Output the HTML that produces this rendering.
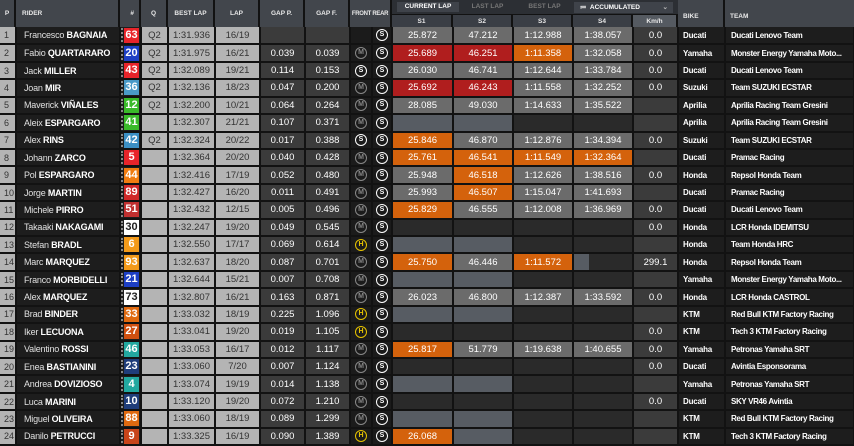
<!DOCTYPE html>
<html><head><meta charset="utf-8"><style>
*{margin:0;padding:0;box-sizing:border-box}
body{width:854px;height:444px;background:#121212;font-family:"Liberation Sans",sans-serif;overflow:hidden;position:relative;color:#eee}
.h{position:absolute;top:0;height:27px;background:#42464c;font-size:6.5px;font-weight:bold;color:#e8e8e8;display:flex;align-items:center;justify-content:center;border-right:2px solid #121212;white-space:nowrap}
table{position:absolute;top:27px;left:0;border-collapse:collapse;table-layout:fixed;width:854px}
td{height:17.43px;border-right:2px solid #121212;border-bottom:2px solid #121212;font-size:9px;text-align:center;white-space:nowrap;overflow:hidden;padding:0}
.p{background:#b4b4b4;color:#333;text-align:left;padding-left:4px}
.lg{background:#b4b4b4;color:#333;font-size:9.5px}
.r{background:#1d1d1d;color:#e0e0e0;text-align:left;padding-left:7px;border-left:2px solid;letter-spacing:-0.2px}
.r b{color:#fff}
.n{background:#1d1d1d;padding:0 1px 0 3px;position:relative}
.n:before{content:"";position:absolute;left:0;top:1px;bottom:1px;border-left:2px dotted #888}
.n span{display:block;height:15px;line-height:15px;color:#fff;font-weight:bold;font-size:11px}
.g{background:#3b3b3b;color:#fff;font-size:9.5px}
.t{background:#1b1b1b}
.c{display:inline-block;width:12px;height:12px;border-radius:50%;border:1.3px solid #fff;font-size:7px;font-weight:bold;line-height:9.5px;text-align:center;vertical-align:middle;color:#fff}
.M{border-color:#888;color:#888}.H{border-color:#e6c300;color:#e6c300}
.sg{background:#6b6b6b;color:#fff;font-size:9.5px}
.sr{background:#b01e1e;color:#fff;font-size:9.5px}
.so{background:#d4620c;color:#fff;font-size:9.5px}
.ss{background:#575c63}
.se{background:#2a2a2a}
.k{background:#3b3b3b;color:#fff;font-size:9.5px}
.b{background:#1d1d1d;color:#fff;text-align:left;padding-left:4px;font-size:8px;font-weight:bold;letter-spacing:-0.2px}
.tm{background:#1d1d1d;color:#fff;text-align:left;padding-left:5px;border-left:2px solid;font-size:8px;font-weight:bold;letter-spacing:-0.35px;text-overflow:ellipsis}
</style></head><body>
<div class="h" style="left:0;width:16px">P</div>
<div class="h" style="left:16px;width:104px;justify-content:flex-start;padding-left:6px">RIDER</div>
<div class="h" style="left:120px;width:21px;justify-content:flex-end;padding-right:5px">#</div>
<div class="h" style="left:141px;width:27px">Q</div>
<div class="h" style="left:168px;width:47px">BEST LAP</div>
<div class="h" style="left:215px;width:45px">LAP</div>
<div class="h" style="left:260px;width:45px">GAP P.</div>
<div class="h" style="left:305px;width:45px">GAP F.</div>
<div class="h" style="left:350px;width:42px;font-size:6px;letter-spacing:-0.3px">FRONT REAR</div>
<div style="position:absolute;left:392px;top:0;width:286px;height:14px;background:#2c2f34"></div>
<div style="position:absolute;left:397px;top:2px;width:62px;height:10px;background:#3f434a;font-size:6.5px;font-weight:bold;color:#fff;text-align:center;line-height:10px">CURRENT LAP</div>
<div style="position:absolute;left:460px;top:2px;width:55px;height:10px;font-size:6.5px;font-weight:bold;color:#777;text-align:center;line-height:10px">LAST LAP</div>
<div style="position:absolute;left:517px;top:2px;width:55px;height:10px;font-size:6.5px;font-weight:bold;color:#777;text-align:center;line-height:10px">BEST LAP</div>
<div style="position:absolute;left:574px;top:2px;width:99px;height:11px;background:#3f434a;font-size:6.5px;font-weight:bold;color:#fff;line-height:11px;padding-left:6px">&#8788;&nbsp; ACCUMULATED<span style="position:absolute;right:5px;color:#bbb">&#8964;</span></div>
<div class="h" style="left:392px;top:15px;height:12px;width:61px;background:#3a3e45">S1</div>
<div class="h" style="left:453px;top:15px;height:12px;width:60px;background:#3a3e45">S2</div>
<div class="h" style="left:513px;top:15px;height:12px;width:60px;background:#3a3e45">S3</div>
<div class="h" style="left:573px;top:15px;height:12px;width:60px;background:#3a3e45">S4</div>
<div class="h" style="left:633px;top:15px;height:12px;width:45px;background:#555a61">Km/h</div>
<div class="h" style="left:678px;width:47px;justify-content:flex-start;padding-left:5px;align-items:flex-end;padding-bottom:7px">BIKE</div>
<div class="h" style="left:725px;width:129px;justify-content:flex-start;padding-left:5px;align-items:flex-end;padding-bottom:7px;border-right:0">TEAM</div>
<table>
<colgroup><col style="width:16px"><col style="width:104px"><col style="width:21px"><col style="width:27px"><col style="width:47px"><col style="width:45px"><col style="width:45px"><col style="width:45px"><col style="width:22px"><col style="width:20px"><col style="width:61px"><col style="width:60px"><col style="width:60px"><col style="width:60px"><col style="width:45px"><col style="width:47px"><col style="width:129px"></colgroup>
<tr><td class="p">1</td><td class="r" style="border-left-color:#e8242a">Francesco <b>BAGNAIA</b></td><td class="n"><span style="background:#e8242a">63</span></td><td class="lg">Q2</td><td class="lg">1:31.936</td><td class="lg">16/19</td><td class="g"></td><td class="g"></td><td class="t"></td><td class="t"><span class="c">S</span></td><td class="sg">25.872</td><td class="sg">47.212</td><td class="sg">1:12.988</td><td class="sg">1:38.057</td><td class="k">0.0</td><td class="b">Ducati</td><td class="tm" style="border-left-color:#e8242a">Ducati Lenovo Team</td></tr>
<tr><td class="p">2</td><td class="r" style="border-left-color:#1d3fc4">Fabio <b>QUARTARARO</b></td><td class="n"><span style="background:#1d3fc4">20</span></td><td class="lg">Q2</td><td class="lg">1:31.975</td><td class="lg">16/21</td><td class="g">0.039</td><td class="g">0.039</td><td class="t"><span class="c M">M</span></td><td class="t"><span class="c">S</span></td><td class="sr">25.689</td><td class="sr">46.251</td><td class="so">1:11.358</td><td class="sg">1:32.058</td><td class="k">0.0</td><td class="b">Yamaha</td><td class="tm" style="border-left-color:#1d3fc4">Monster Energy Yamaha Moto...</td></tr>
<tr><td class="p">3</td><td class="r" style="border-left-color:#e8242a">Jack <b>MILLER</b></td><td class="n"><span style="background:#e8242a">43</span></td><td class="lg">Q2</td><td class="lg">1:32.089</td><td class="lg">19/21</td><td class="g">0.114</td><td class="g">0.153</td><td class="t"><span class="c">S</span></td><td class="t"><span class="c">S</span></td><td class="sg">26.030</td><td class="sg">46.741</td><td class="sg">1:12.644</td><td class="sg">1:33.784</td><td class="k">0.0</td><td class="b">Ducati</td><td class="tm" style="border-left-color:#e8242a">Ducati Lenovo Team</td></tr>
<tr><td class="p">4</td><td class="r" style="border-left-color:#4a9ac8">Joan <b>MIR</b></td><td class="n"><span style="background:#4a9ac8">36</span></td><td class="lg">Q2</td><td class="lg">1:32.136</td><td class="lg">18/23</td><td class="g">0.047</td><td class="g">0.200</td><td class="t"><span class="c M">M</span></td><td class="t"><span class="c">S</span></td><td class="sr">25.692</td><td class="sr">46.243</td><td class="sg">1:11.558</td><td class="sg">1:32.252</td><td class="k">0.0</td><td class="b">Suzuki</td><td class="tm" style="border-left-color:#4a9ac8">Team SUZUKI ECSTAR</td></tr>
<tr><td class="p">5</td><td class="r" style="border-left-color:#3aba2a">Maverick <b>VIÑALES</b></td><td class="n"><span style="background:#3aba2a">12</span></td><td class="lg">Q2</td><td class="lg">1:32.200</td><td class="lg">10/21</td><td class="g">0.064</td><td class="g">0.264</td><td class="t"><span class="c M">M</span></td><td class="t"><span class="c">S</span></td><td class="sg">28.085</td><td class="sg">49.030</td><td class="sg">1:14.633</td><td class="sg">1:35.522</td><td class="k"></td><td class="b">Aprilia</td><td class="tm" style="border-left-color:#3aba2a">Aprilia Racing Team Gresini</td></tr>
<tr><td class="p">6</td><td class="r" style="border-left-color:#3aba2a">Aleix <b>ESPARGARO</b></td><td class="n"><span style="background:#3aba2a">41</span></td><td class="lg"></td><td class="lg">1:32.307</td><td class="lg">21/21</td><td class="g">0.107</td><td class="g">0.371</td><td class="t"><span class="c M">M</span></td><td class="t"><span class="c">S</span></td><td class="ss"></td><td class="ss"></td><td class="se"></td><td class="se"></td><td class="k"></td><td class="b">Aprilia</td><td class="tm" style="border-left-color:#3aba2a">Aprilia Racing Team Gresini</td></tr>
<tr><td class="p">7</td><td class="r" style="border-left-color:#3b8fc4">Alex <b>RINS</b></td><td class="n"><span style="background:#3b8fc4">42</span></td><td class="lg">Q2</td><td class="lg">1:32.324</td><td class="lg">20/22</td><td class="g">0.017</td><td class="g">0.388</td><td class="t"><span class="c">S</span></td><td class="t"><span class="c">S</span></td><td class="so">25.846</td><td class="sg">46.870</td><td class="sg">1:12.876</td><td class="sg">1:34.394</td><td class="k">0.0</td><td class="b">Suzuki</td><td class="tm" style="border-left-color:#3b8fc4">Team SUZUKI ECSTAR</td></tr>
<tr><td class="p">8</td><td class="r" style="border-left-color:#e8242a">Johann <b>ZARCO</b></td><td class="n"><span style="background:#e8242a">5</span></td><td class="lg"></td><td class="lg">1:32.364</td><td class="lg">20/20</td><td class="g">0.040</td><td class="g">0.428</td><td class="t"><span class="c M">M</span></td><td class="t"><span class="c">S</span></td><td class="so">25.761</td><td class="so">46.541</td><td class="so">1:11.549</td><td class="so">1:32.364</td><td class="k"></td><td class="b">Ducati</td><td class="tm" style="border-left-color:#c02030">Pramac Racing</td></tr>
<tr><td class="p">9</td><td class="r" style="border-left-color:#f07c10">Pol <b>ESPARGARO</b></td><td class="n"><span style="background:#f07c10">44</span></td><td class="lg"></td><td class="lg">1:32.416</td><td class="lg">17/19</td><td class="g">0.052</td><td class="g">0.480</td><td class="t"><span class="c M">M</span></td><td class="t"><span class="c">S</span></td><td class="sg">25.948</td><td class="so">46.518</td><td class="sg">1:12.626</td><td class="sg">1:38.516</td><td class="k">0.0</td><td class="b">Honda</td><td class="tm" style="border-left-color:#f07c10">Repsol Honda Team</td></tr>
<tr><td class="p">10</td><td class="r" style="border-left-color:#d02828">Jorge <b>MARTIN</b></td><td class="n"><span style="background:#d02828">89</span></td><td class="lg"></td><td class="lg">1:32.427</td><td class="lg">16/20</td><td class="g">0.011</td><td class="g">0.491</td><td class="t"><span class="c M">M</span></td><td class="t"><span class="c">S</span></td><td class="sg">25.993</td><td class="so">46.507</td><td class="sg">1:15.047</td><td class="sg">1:41.693</td><td class="k"></td><td class="b">Ducati</td><td class="tm" style="border-left-color:#c02030">Pramac Racing</td></tr>
<tr><td class="p">11</td><td class="r" style="border-left-color:#c03030">Michele <b>PIRRO</b></td><td class="n"><span style="background:#c03030">51</span></td><td class="lg"></td><td class="lg">1:32.432</td><td class="lg">12/15</td><td class="g">0.005</td><td class="g">0.496</td><td class="t"><span class="c M">M</span></td><td class="t"><span class="c">S</span></td><td class="so">25.829</td><td class="sg">46.555</td><td class="sg">1:12.008</td><td class="sg">1:36.969</td><td class="k">0.0</td><td class="b">Ducati</td><td class="tm" style="border-left-color:#e8242a">Ducati Lenovo Team</td></tr>
<tr><td class="p">12</td><td class="r" style="border-left-color:#fff">Takaaki <b>NAKAGAMI</b></td><td class="n"><span style="background:#fff;color:#222">30</span></td><td class="lg"></td><td class="lg">1:32.247</td><td class="lg">19/20</td><td class="g">0.049</td><td class="g">0.545</td><td class="t"><span class="c M">M</span></td><td class="t"><span class="c">S</span></td><td class="se"></td><td class="se"></td><td class="se"></td><td class="se"></td><td class="k">0.0</td><td class="b">Honda</td><td class="tm" style="border-left-color:#fff">LCR Honda IDEMITSU</td></tr>
<tr><td class="p">13</td><td class="r" style="border-left-color:#f39a1a">Stefan <b>BRADL</b></td><td class="n"><span style="background:#f39a1a">6</span></td><td class="lg"></td><td class="lg">1:32.550</td><td class="lg">17/17</td><td class="g">0.069</td><td class="g">0.614</td><td class="t"><span class="c H">H</span></td><td class="t"><span class="c">S</span></td><td class="ss"></td><td class="ss"></td><td class="se"></td><td class="se"></td><td class="k"></td><td class="b">Honda</td><td class="tm" style="border-left-color:#f07c10">Team Honda HRC</td></tr>
<tr><td class="p">14</td><td class="r" style="border-left-color:#f39a1a">Marc <b>MARQUEZ</b></td><td class="n"><span style="background:#f39a1a">93</span></td><td class="lg"></td><td class="lg">1:32.637</td><td class="lg">18/20</td><td class="g">0.087</td><td class="g">0.701</td><td class="t"><span class="c M">M</span></td><td class="t"><span class="c">S</span></td><td class="so">25.750</td><td class="sg">46.446</td><td class="so">1:11.572</td><td class="se" style="background:linear-gradient(90deg,#575c63 15px,#2a2a2a 15px)"></td><td class="k">299.1</td><td class="b">Honda</td><td class="tm" style="border-left-color:#f07c10">Repsol Honda Team</td></tr>
<tr><td class="p">15</td><td class="r" style="border-left-color:#1d3fc4">Franco <b>MORBIDELLI</b></td><td class="n"><span style="background:#1d3fc4">21</span></td><td class="lg"></td><td class="lg">1:32.644</td><td class="lg">15/21</td><td class="g">0.007</td><td class="g">0.708</td><td class="t"><span class="c M">M</span></td><td class="t"><span class="c">S</span></td><td class="ss"></td><td class="ss"></td><td class="se"></td><td class="se"></td><td class="k"></td><td class="b">Yamaha</td><td class="tm" style="border-left-color:#1d3fc4">Monster Energy Yamaha Moto...</td></tr>
<tr><td class="p">16</td><td class="r" style="border-left-color:#fff">Alex <b>MARQUEZ</b></td><td class="n"><span style="background:#fff;color:#222">73</span></td><td class="lg"></td><td class="lg">1:32.807</td><td class="lg">16/21</td><td class="g">0.163</td><td class="g">0.871</td><td class="t"><span class="c M">M</span></td><td class="t"><span class="c">S</span></td><td class="sg">26.023</td><td class="sg">46.800</td><td class="sg">1:12.387</td><td class="sg">1:33.592</td><td class="k">0.0</td><td class="b">Honda</td><td class="tm" style="border-left-color:#fff">LCR Honda CASTROL</td></tr>
<tr><td class="p">17</td><td class="r" style="border-left-color:#e06a10">Brad <b>BINDER</b></td><td class="n"><span style="background:#e06a10">33</span></td><td class="lg"></td><td class="lg">1:33.032</td><td class="lg">18/19</td><td class="g">0.225</td><td class="g">1.096</td><td class="t"><span class="c H">H</span></td><td class="t"><span class="c">S</span></td><td class="ss"></td><td class="ss"></td><td class="se"></td><td class="se"></td><td class="k"></td><td class="b">KTM</td><td class="tm" style="border-left-color:#e06a10">Red Bull KTM Factory Racing</td></tr>
<tr><td class="p">18</td><td class="r" style="border-left-color:#d05010">Iker <b>LECUONA</b></td><td class="n"><span style="background:#d05010">27</span></td><td class="lg"></td><td class="lg">1:33.041</td><td class="lg">19/20</td><td class="g">0.019</td><td class="g">1.105</td><td class="t"><span class="c H">H</span></td><td class="t"><span class="c">S</span></td><td class="se"></td><td class="se"></td><td class="se"></td><td class="se"></td><td class="k">0.0</td><td class="b">KTM</td><td class="tm" style="border-left-color:#d05010">Tech 3 KTM Factory Racing</td></tr>
<tr><td class="p">19</td><td class="r" style="border-left-color:#22a8a0">Valentino <b>ROSSI</b></td><td class="n"><span style="background:#22a8a0">46</span></td><td class="lg"></td><td class="lg">1:33.053</td><td class="lg">16/17</td><td class="g">0.012</td><td class="g">1.117</td><td class="t"><span class="c M">M</span></td><td class="t"><span class="c">S</span></td><td class="so">25.817</td><td class="sg">51.779</td><td class="sg">1:19.638</td><td class="sg">1:40.655</td><td class="k">0.0</td><td class="b">Yamaha</td><td class="tm" style="border-left-color:#22a8a0">Petronas Yamaha SRT</td></tr>
<tr><td class="p">20</td><td class="r" style="border-left-color:#1f3d7a">Enea <b>BASTIANINI</b></td><td class="n"><span style="background:#1f3d7a">23</span></td><td class="lg"></td><td class="lg">1:33.060</td><td class="lg">7/20</td><td class="g">0.007</td><td class="g">1.124</td><td class="t"><span class="c M">M</span></td><td class="t"><span class="c">S</span></td><td class="se"></td><td class="se"></td><td class="se"></td><td class="se"></td><td class="k">0.0</td><td class="b">Ducati</td><td class="tm" style="border-left-color:#1f3d7a">Avintia Esponsorama</td></tr>
<tr><td class="p">21</td><td class="r" style="border-left-color:#22a8a0">Andrea <b>DOVIZIOSO</b></td><td class="n"><span style="background:#22a8a0">4</span></td><td class="lg"></td><td class="lg">1:33.074</td><td class="lg">19/19</td><td class="g">0.014</td><td class="g">1.138</td><td class="t"><span class="c M">M</span></td><td class="t"><span class="c">S</span></td><td class="ss"></td><td class="ss"></td><td class="se"></td><td class="se"></td><td class="k"></td><td class="b">Yamaha</td><td class="tm" style="border-left-color:#22a8a0">Petronas Yamaha SRT</td></tr>
<tr><td class="p">22</td><td class="r" style="border-left-color:#1f3d7a">Luca <b>MARINI</b></td><td class="n"><span style="background:#1f3d7a">10</span></td><td class="lg"></td><td class="lg">1:33.120</td><td class="lg">19/20</td><td class="g">0.072</td><td class="g">1.210</td><td class="t"><span class="c M">M</span></td><td class="t"><span class="c">S</span></td><td class="se"></td><td class="se"></td><td class="se"></td><td class="se"></td><td class="k">0.0</td><td class="b">Ducati</td><td class="tm" style="border-left-color:#1f3d7a">SKY VR46 Avintia</td></tr>
<tr><td class="p">23</td><td class="r" style="border-left-color:#e06a10">Miguel <b>OLIVEIRA</b></td><td class="n"><span style="background:#e06a10">88</span></td><td class="lg"></td><td class="lg">1:33.060</td><td class="lg">18/19</td><td class="g">0.089</td><td class="g">1.299</td><td class="t"><span class="c M">M</span></td><td class="t"><span class="c">S</span></td><td class="ss"></td><td class="ss"></td><td class="se"></td><td class="se"></td><td class="k"></td><td class="b">KTM</td><td class="tm" style="border-left-color:#e06a10">Red Bull KTM Factory Racing</td></tr>
<tr><td class="p">24</td><td class="r" style="border-left-color:#c8441a">Danilo <b>PETRUCCI</b></td><td class="n"><span style="background:#c8441a">9</span></td><td class="lg"></td><td class="lg">1:33.325</td><td class="lg">16/19</td><td class="g">0.090</td><td class="g">1.389</td><td class="t"><span class="c H">H</span></td><td class="t"><span class="c">S</span></td><td class="so">26.068</td><td class="ss"></td><td class="se"></td><td class="se"></td><td class="k"></td><td class="b">KTM</td><td class="tm" style="border-left-color:#c8441a">Tech 3 KTM Factory Racing</td></tr>
</table>
</body></html>
